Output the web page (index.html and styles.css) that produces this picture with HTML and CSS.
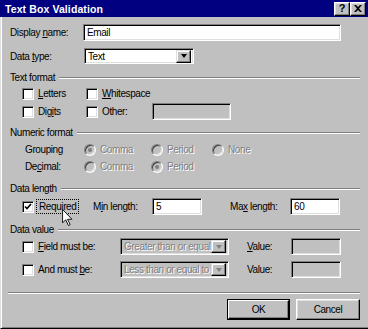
FILE: index.html
```html
<!DOCTYPE html>
<html lang="en">
<head>
  <meta charset="UTF-8" />
  <title>Text Box Validation</title>
  <link rel="stylesheet" href="styles.css">
</head>
<body>
<div class="window">

  <!-- Title bar -->
  <div class="titlebar">
    <span class="title">Text Box Validation</span>
    <span class="tbtn help">?</span>
    <span class="tbtn close">
      <svg width="8" height="7" viewBox="0 0 8 7"><path d="M0 0h2l2 2 2-2h2L5 3.5 8 7H6L4 5 2 7H0l3-3.5z" fill="#000"/></svg>
    </span>
  </div>

  <div class="body">
    <!-- Name / type -->
    <div class="row r-name">
      <span class="w-name">Display <u>n</u>ame:</span>
      <div class="field w-namefield">Email</div>
    </div>
    <div class="row r-type">
      <span class="w-type">Data <u>t</u>ype:</span>
      <div class="field combo w-combo">
        <span class="combo-text">Text</span>
        <span class="dropbtn"><i class="arrow"></i></span>
      </div>
    </div>

    <!-- Text format -->
    <div class="group-head"><span>Text format</span><i class="line"></i></div>
    <div class="row r-check1 indent">
      <span class="opt w-opt1"><i class="box"></i><span><u>L</u>etters</span></span>
      <span class="opt"><i class="box"></i><span><u>W</u>hitespace</span></span>
    </div>
    <div class="row r-check2 indent">
      <span class="opt w-opt1"><i class="box"></i><span>Dig<u>i</u>ts</span></span>
      <span class="opt w-other"><i class="box"></i><span>Other:</span></span>
      <div class="field w-otherfield"></div>
    </div>

    <!-- Numeric format -->
    <div class="group-head g-num"><span>Numeric format</span><i class="line"></i></div>
    <div class="row r-radio1 indent2">
      <span class="w-rlabel">Grouping</span>
      <span class="opt w-r1"><i class="radio on"></i><span class="dis">Comma</span></span>
      <span class="opt w-r2"><i class="radio"></i><span class="dis">Period</span></span>
      <span class="opt"><i class="radio"></i><span class="dis">None</span></span>
    </div>
    <div class="row r-radio2 indent2">
      <span class="w-rlabel">De<u>c</u>imal:</span>
      <span class="opt w-r1"><i class="radio"></i><span class="dis">Comma</span></span>
      <span class="opt"><i class="radio on"></i><span class="dis">Period</span></span>
    </div>

    <!-- Data length -->
    <div class="group-head g-len"><span>Data length</span><i class="line"></i></div>
    <div class="row r-len indent">
      <span class="opt w-req">
        <i class="box">
          <svg width="8" height="8" viewBox="0 0 8 8"><path d="M1 3.5l2 2 4-4.5" fill="none" stroke="#000" stroke-width="1.6"/></svg>
        </i>
        <span class="focus">Required</span>
      </span>
      <span class="w-min">M<u>i</u>n length:</span>
      <div class="field w-small">5</div>
      <span class="w-max">Ma<u>x</u> length:</span>
      <div class="field w-small">60</div>
    </div>

    <!-- Data value -->
    <div class="group-head g-val"><span>Data value</span><i class="line"></i></div>
    <div class="row r-val1 indent">
      <span class="opt w-must"><i class="box"></i><span><u>F</u>ield must be:</span></span>
      <div class="field combo dis-field w-vcombo">
        <span class="combo-text dis">Greater than or equal to</span>
        <span class="dropbtn"><i class="arrow dis-arrow"></i></span>
      </div>
      <span class="w-value"><u>V</u>alue:</span>
      <div class="field dis-field w-small"></div>
    </div>
    <div class="row r-val2 indent">
      <span class="opt w-must"><i class="box"></i><span>And must <u>b</u>e:</span></span>
      <div class="field combo dis-field w-vcombo">
        <span class="combo-text dis">Less than or equal to</span>
        <span class="dropbtn"><i class="arrow dis-arrow"></i></span>
      </div>
      <span class="w-value">Value:</span>
      <div class="field dis-field w-small"></div>
    </div>

    <i class="sep"></i>

    <!-- Buttons -->
    <div class="buttons">
      <span class="btn default"><span class="btn-in">OK</span></span>
      <span class="btn cancel"><span class="btn-in">Cancel</span></span>
    </div>
  </div>

  <!-- mouse pointer -->
  <svg class="cursor" width="11" height="17" viewBox="0 0 12 19">
    <path d="M0.5 0.5v15l3.5-3.5 3 6.5 2-1-3-6h5z" fill="#fff" stroke="#000" stroke-width="1"/>
  </svg>
</div>
</body>
</html>
```

FILE: styles.css
```css
/* ---------- Base ---------- */
*{box-sizing:border-box}
body{
  margin:0;
  background:#c0c0c0;
  font-family:"Liberation Sans",Arial,sans-serif;
  font-size:10px;
  letter-spacing:-.4px;
  color:#000;
}
u{text-decoration:underline;text-underline-offset:1px}
i{display:block;font-style:normal}

.window{position:relative;width:368px;height:329px;background:#c0c0c0;display:flex;flex-direction:column}

/* ---------- Title bar ---------- */
.titlebar{
  height:17px;
  background:#000080;
  display:flex;
  align-items:center;
  padding:0 2px 0 5px;
  flex:none;
}
.title{flex:1;color:#fff;font-weight:bold;font-size:10.5px;letter-spacing:.1px}
.tbtn{
  width:16px;height:14px;
  background:#c0c0c0;
  border:1px solid;border-color:#fff #000 #000 #fff;
  box-shadow:inset -1px -1px #808080,inset 1px 1px #dfdfdf;
  display:flex;align-items:center;justify-content:center;
  font-weight:bold;font-size:11px;line-height:1;letter-spacing:0;
}

/* ---------- Body ---------- */
.body{
  flex:1;
  border-left:1px solid #dfdfdf;
  border-bottom:1px solid #000;
  box-shadow:inset 1px 0 #fff,inset 0 -1px #808080;
  padding:7px 8px 0 9px;
  display:flex;flex-direction:column;
}
.row{display:flex;align-items:center;flex:none}
.indent{padding-left:12px}
.indent2{padding-left:15px}

.r-name{height:17px}
.r-type{height:16px;margin-top:7px}
.w-name{width:73px}
.w-type{width:74px}
.w-namefield{width:258px}
.w-combo{width:110px}

/* sunken field */
.field{
  height:17px;
  background:#fff;
  border:1px solid;border-color:#808080 #fff #fff #808080;
  box-shadow:inset 1px 1px #000,inset -1px -1px #dfdfdf;
  padding:0 3px;
  display:flex;align-items:center;
  white-space:nowrap;overflow:hidden;
}
.r-type .field{height:16px}
.dis-field{background:#c0c0c0}
.combo{padding:0 2px 0 3px}
.combo-text{flex:1;overflow:hidden}
.dropbtn{
  width:15px;height:13px;flex:none;
  background:#c0c0c0;
  border:1px solid;border-color:#dfdfdf #000 #000 #dfdfdf;
  box-shadow:inset -1px -1px #808080,inset 1px 1px #fff;
  display:flex;align-items:center;justify-content:center;
}
.arrow{width:0;height:0;border-left:3.5px solid transparent;border-right:3.5px solid transparent;border-top:4px solid #000}
.dis-arrow{border-top-color:#808080}

/* disabled text */
.dis{color:#808080;text-shadow:1px 1px #fff}

/* ---------- Group headings ---------- */
.group-head{display:flex;align-items:center;height:13px;margin-top:7px;flex:none}
.group-head .line{flex:1;margin-left:4px;height:2px;border-top:1px solid #808080;border-bottom:1px solid #fff}
.g-num{margin-top:6px}
.g-len{margin-top:7px}
.g-val{margin-top:7px}

/* ---------- Options ---------- */
.opt{display:flex;align-items:center;gap:4px;flex:none}
.box{
  width:12px;height:12px;flex:none;
  background:#fff;
  border:1px solid;border-color:#808080 #fff #fff #808080;
  box-shadow:inset 1px 1px #000,inset -1px -1px #dfdfdf;
  display:flex;align-items:center;justify-content:center;
}
.radio{
  width:12px;height:12px;flex:none;
  border-radius:50%;
  background:#c0c0c0;
  border:1px solid;border-color:#808080 #fff #fff #808080;
  box-shadow:inset 1px 1px #404040,inset -1px -1px #dfdfdf;
  position:relative;
}
.radio.on::after{content:"";position:absolute;left:3px;top:3px;width:4px;height:4px;border-radius:50%;background:#808080}

.r-check1{height:19px}
.r-check2{height:17px}
.w-opt1{width:64px}
.w-other{width:66px}
.w-otherfield{width:79px;background:#c0c0c0}

.r-radio1{height:17px;margin-top:2px}
.r-radio2{height:17px}
.w-rlabel{width:59px}
.w-r1{width:67px}
.w-r2{width:61px}

.r-len{height:19px;margin-top:2px}
.w-req{width:71px}
.focus{outline:1px dotted #000;outline-offset:1px;padding:0 1px}
.w-min{width:59px}
.w-max{width:60px;margin-left:28px}
.w-small{width:50px}

.r-val1{height:17px;margin-top:2px}
.r-val2{height:17px;margin-top:6px}
.w-must{width:98px}
.w-vcombo{width:109px}
.w-value{width:44px;margin-left:18px}

/* ---------- Separator & buttons ---------- */
.sep{height:2px;margin:14px 0 0 -2px;border-top:1px solid #808080;border-bottom:1px solid #fff;flex:none}
.buttons{display:flex;justify-content:flex-end;gap:6px;margin-top:5px}
.btn{
  height:21px;
  background:#c0c0c0;
  border:1px solid;border-color:#fff #000 #000 #fff;
  box-shadow:inset -1px -1px #808080,inset 1px 1px #dfdfdf;
  display:flex;align-items:center;justify-content:center;
}
.btn.default{width:63px;border:1px solid #000;box-shadow:none}
.btn.default .btn-in{
  width:100%;height:100%;
  border:1px solid;border-color:#fff #000 #000 #fff;
  box-shadow:inset -1px -1px #808080;
  display:flex;align-items:center;justify-content:center;
}
.btn.cancel{width:64px}

/* ---------- Pointer ---------- */
.cursor{position:absolute;left:62px;top:209px}
```
